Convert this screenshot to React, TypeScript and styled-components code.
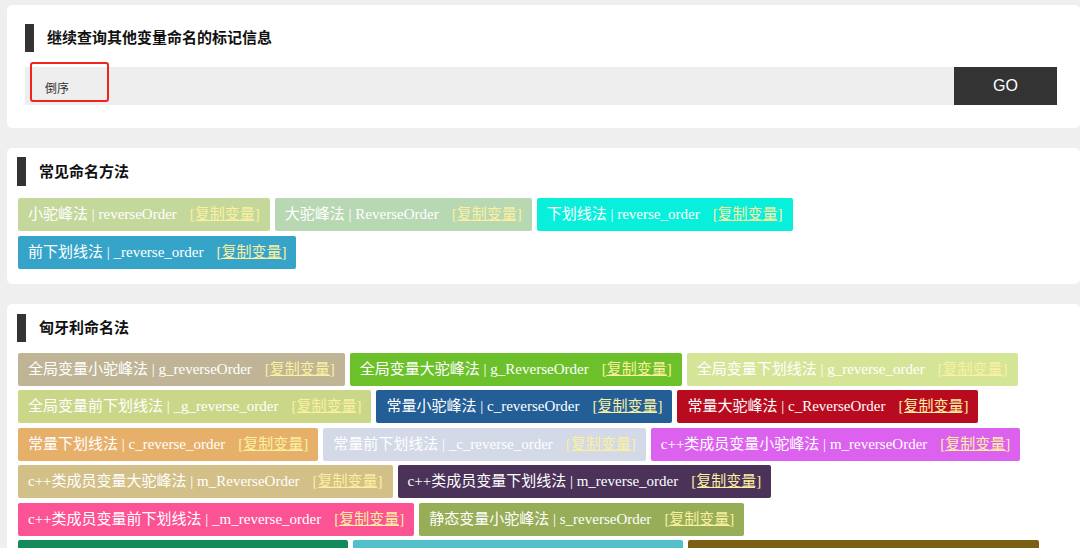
import React from "react";
import styled, { createGlobalStyle } from "styled-components";

const GlobalStyle = createGlobalStyle`
    body {
        margin: 0;
        background: #efefef;
        font-family: "Liberation Sans", "Noto Sans CJK SC", sans-serif;
    }
`

const Page = styled.div`
    display: flex;
    flex-direction: column;
    gap: 20px;
    padding: 5px 0 0 7px;
    height: 548px;
    overflow: hidden;
    box-sizing: border-box;
`

const Card = styled.section<{ $pad: string }>`
    background: #fff;
    border-radius: 5px;
    padding: ${p => p.$pad};
    flex-shrink: 0;
`

const Title = styled.h3<{ $h: number }>`
    margin: 0;
    height: ${p => p.$h}px;
    display: flex;
    align-items: center;
    border-left: 9px solid #333;
    padding: 0 0 3px 13px;
    box-sizing: border-box;
    font-family: "Noto Sans CJK SC", sans-serif;
    font-size: 15px;
    font-weight: 700;
    color: #111;
`

const SearchRow = styled.div`
    position: relative;
    display: flex;
    height: 38px;
    margin-top: 15px;
`

const SearchInput = styled.div`
    flex: 1;
    background: #eee;
    padding: 10px 0 0 20px;
    font-family: "Noto Sans CJK SC", sans-serif;
    font-size: 12px;
    line-height: 22px;
    color: #333;
`

const GoButton = styled.button`
    width: 103px;
    border: none;
    background: #333;
    color: #fff;
    font-family: "Liberation Sans", sans-serif;
    font-size: 16px;
    padding: 0;
`

const Highlight = styled.div`
    position: absolute;
    left: 5px;
    top: -5px;
    width: 75px;
    height: 36px;
    border: 2px solid #f2231f;
    border-radius: 3px;
`

const TagList = styled.div<{ $top: number }>`
    display: flex;
    flex-wrap: wrap;
    column-gap: 5px;
    row-gap: 4.5px;
    margin: ${p => p.$top}px 0 0 1px;
`

const Tag = styled.div<{ $bg: string }>`
    height: 33px;
    padding: 0 10px;
    border-radius: 2px;
    background: ${p => p.$bg};
    color: #fff;
    font-family: "Liberation Serif", "Noto Sans CJK SC", serif;
    font-size: 15px;
    line-height: 33px;
    white-space: nowrap;
`

const CopyLink = styled.a`
    margin-left: 13px;
    color: #fbf0a0;
    text-decoration: underline;
    cursor: pointer;
`

type TagItem = { label: string, name: string, color: string }

const common: TagItem[] = [
    { label: "小驼峰法", name: "reverseOrder", color: "#c5d89c" },
    { label: "大驼峰法", name: "ReverseOrder", color: "#b7d8b2" },
    { label: "下划线法", name: "reverse_order", color: "#08f0dc" },
    { label: "前下划线法", name: "_reverse_order", color: "#36a4c9" },
]

const hungarian: TagItem[] = [
    { label: "全局变量小驼峰法", name: "g_reverseOrder", color: "#bfb596" },
    { label: "全局变量大驼峰法", name: "g_ReverseOrder", color: "#6cc12a" },
    { label: "全局变量下划线法", name: "g_reverse_order", color: "#d5e598" },
    { label: "全局变量前下划线法", name: "_g_reverse_order", color: "#cad788" },
    { label: "常量小驼峰法", name: "c_reverseOrder", color: "#235f96" },
    { label: "常量大驼峰法", name: "c_ReverseOrder", color: "#b90b1f" },
    { label: "常量下划线法", name: "c_reverse_order", color: "#e6b06a" },
    { label: "常量前下划线法", name: "_c_reverse_order", color: "#d3d9e7" },
    { label: "c++类成员变量小驼峰法", name: "m_reverseOrder", color: "#dd61ef" },
    { label: "c++类成员变量大驼峰法", name: "m_ReverseOrder", color: "#d3c088" },
    { label: "c++类成员变量下划线法", name: "m_reverse_order", color: "#4a3258" },
    { label: "c++类成员变量前下划线法", name: "_m_reverse_order", color: "#fb5394" },
    { label: "静态变量小驼峰法", name: "s_reverseOrder", color: "#97ad57" },
    { label: "静态变量大驼峰法", name: "s_ReverseOrder", color: "#138a5a" },
    { label: "静态变量下划线法", name: "s_reverse_order", color: "#52c0cb" },
    { label: "静态变量前下划线法", name: "_s_reverse_order", color: "#7a5f14" },
]

const Tags: React.FC<{ items: TagItem[], top: number }> = ({ items, top }) => (
    <TagList $top={top}>
        {items.map(t => (
            <Tag key={t.name} $bg={t.color}>
                {t.label} | {t.name}<CopyLink>[复制变量]</CopyLink>
            </Tag>
        ))}
    </TagList>
)

const App: React.FC = () => {
    return (
        <>
            <GlobalStyle />
            <Page>
                <Card $pad="19px 23px 23px 18px">
                    <Title $h={28}>继续查询其他变量命名的标记信息</Title>
                    <SearchRow>
                        <SearchInput>倒序</SearchInput>
                        <GoButton>GO</GoButton>
                        <Highlight />
                    </SearchRow>
                </Card>
                <Card $pad="9px 14px 15px 10px">
                    <Title $h={29}>常见命名方法</Title>
                    <Tags items={common} top={12} />
                </Card>
                <Card $pad="10px 14px 15px 10px">
                    <Title $h={28}>匈牙利命名法</Title>
                    <Tags items={hungarian} top={11} />
                </Card>
            </Page>
        </>
    )
}

export default App;
